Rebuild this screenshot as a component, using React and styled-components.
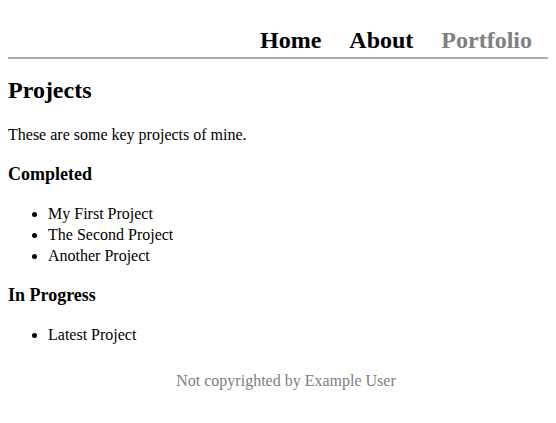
import React from "react";
import styled, { createGlobalStyle } from "styled-components";

const GlobalStyle = createGlobalStyle`
  body {
    margin: 8px;
    font-family: "Liberation Serif", "Times New Roman", serif;
    font-size: 16px;
    color: #000;
    background: #fff;
  }
`;

const completed = ["My First Project", "The Second Project", "Another Project"];
const inProgress = ["Latest Project"];

const App = () => {
  return (
    <>
      <GlobalStyle />
      <Header>
        <NavLink>Home</NavLink>
        <NavLink>About</NavLink>
        <NavLink active>Portfolio</NavLink>
      </Header>
      <Main>
        <Title>Projects</Title>
        <Intro>These are some key projects of mine.</Intro>
        <Section>Completed</Section>
        <List>
          {completed.map((item, id) => (
            <li key={id}>{item}</li>
          ))}
        </List>
        <Section>In Progress</Section>
        <List>
          {inProgress.map((item, id) => (
            <li key={id}>{item}</li>
          ))}
        </List>
      </Main>
      <Footer>Not copyrighted by Example User</Footer>
    </>
  );
};

export default App;

const Header = styled.nav`
  display: flex;
  justify-content: flex-end;
  gap: 28px;
  padding: 19px 16px 3px 0;
  border-bottom: 2px solid #acacac;
`;

const NavLink = styled.a`
  font-size: 24px;
  font-weight: bold;
  color: ${(p) => (p.active ? "#808080" : "#000")};
  cursor: pointer;
`;

const Main = styled.main``;

const Title = styled.h1`
  font-size: 24px;
  font-weight: bold;
  margin: 18px 0 0;
`;

const Intro = styled.p`
  margin: 22px 0 0;
`;

const Section = styled.h3`
  font-size: 18px;
  margin: 20px 0 0;

  ul + & {
    margin-top: 19px;
  }
`;

const List = styled.ul`
  margin: 18px 0 0;
  padding-left: 40px;
  line-height: 21px;
`;

const Footer = styled.footer`
  text-align: center;
  color: #808080;
  margin-top: 27px;
  padding-left: 16px;
`;
